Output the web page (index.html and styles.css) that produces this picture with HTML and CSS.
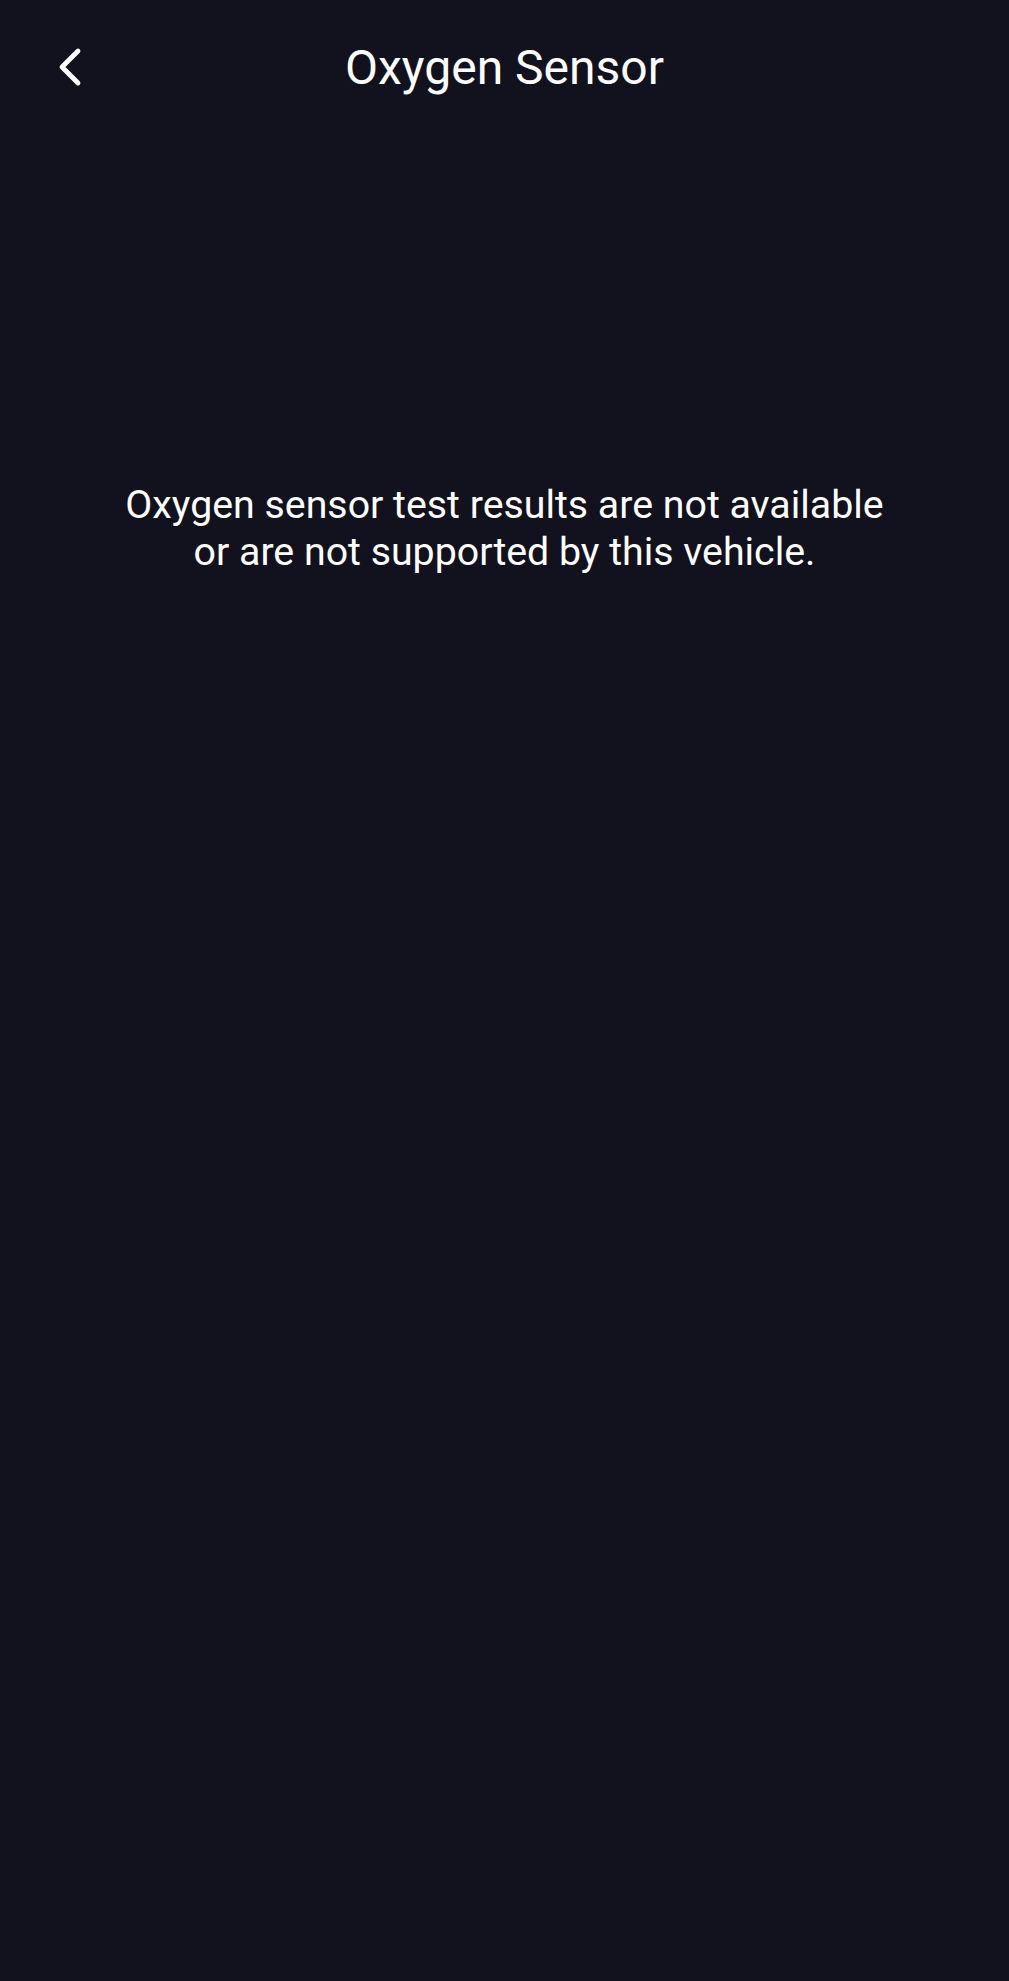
FILE: index.html
```html
<!DOCTYPE html>
<html lang="en">
<head>
<meta charset="utf-8">
<title>Oxygen Sensor</title>
<link rel="stylesheet" href="styles.css">
</head>
<body>
<div class="screen">
  <header class="topbar">
    <button class="back" aria-label="Back">
      <svg width="30" height="40" viewBox="0 0 30 40" fill="none">
        <path d="M25 4 L9 20 L25 36" stroke="#ffffff" stroke-width="4.8" stroke-linecap="round" stroke-linejoin="round"/>
      </svg>
    </button>
    <h1 class="title">Oxygen Sensor</h1>
  </header>
  <main class="content">
    <p class="message">Oxygen sensor test results are not available<br>or are not supported by this vehicle.</p>
  </main>
</div>
</body>
</html>
```
FILE: styles.css
```css
html, body {
  margin: 0;
  padding: 0;
  background: #12121e;
}
body {
  font-family: Roboto, "Noto Sans", sans-serif;
  color: #ffffff;
}
.screen {
  min-height: 1981px;
  display: flex;
  flex-direction: column;
}
.topbar {
  height: 136px;
  display: flex;
  align-items: center;
  justify-content: center;
  position: relative;
}
.back {
  position: absolute;
  left: 53px;
  top: 47px;
  width: 40px;
  height: 40px;
  padding: 0;
  border: 0;
  background: transparent;
  display: flex;
  align-items: center;
  justify-content: flex-start;
}
.title {
  margin: 0;
  font-size: 48px;
  font-weight: 400;
  line-height: 136px;
}
.content {
  padding-top: 346px;
}
.message {
  margin: 0;
  text-align: center;
  font-size: 39.3px;
  line-height: 47px;
}
```
